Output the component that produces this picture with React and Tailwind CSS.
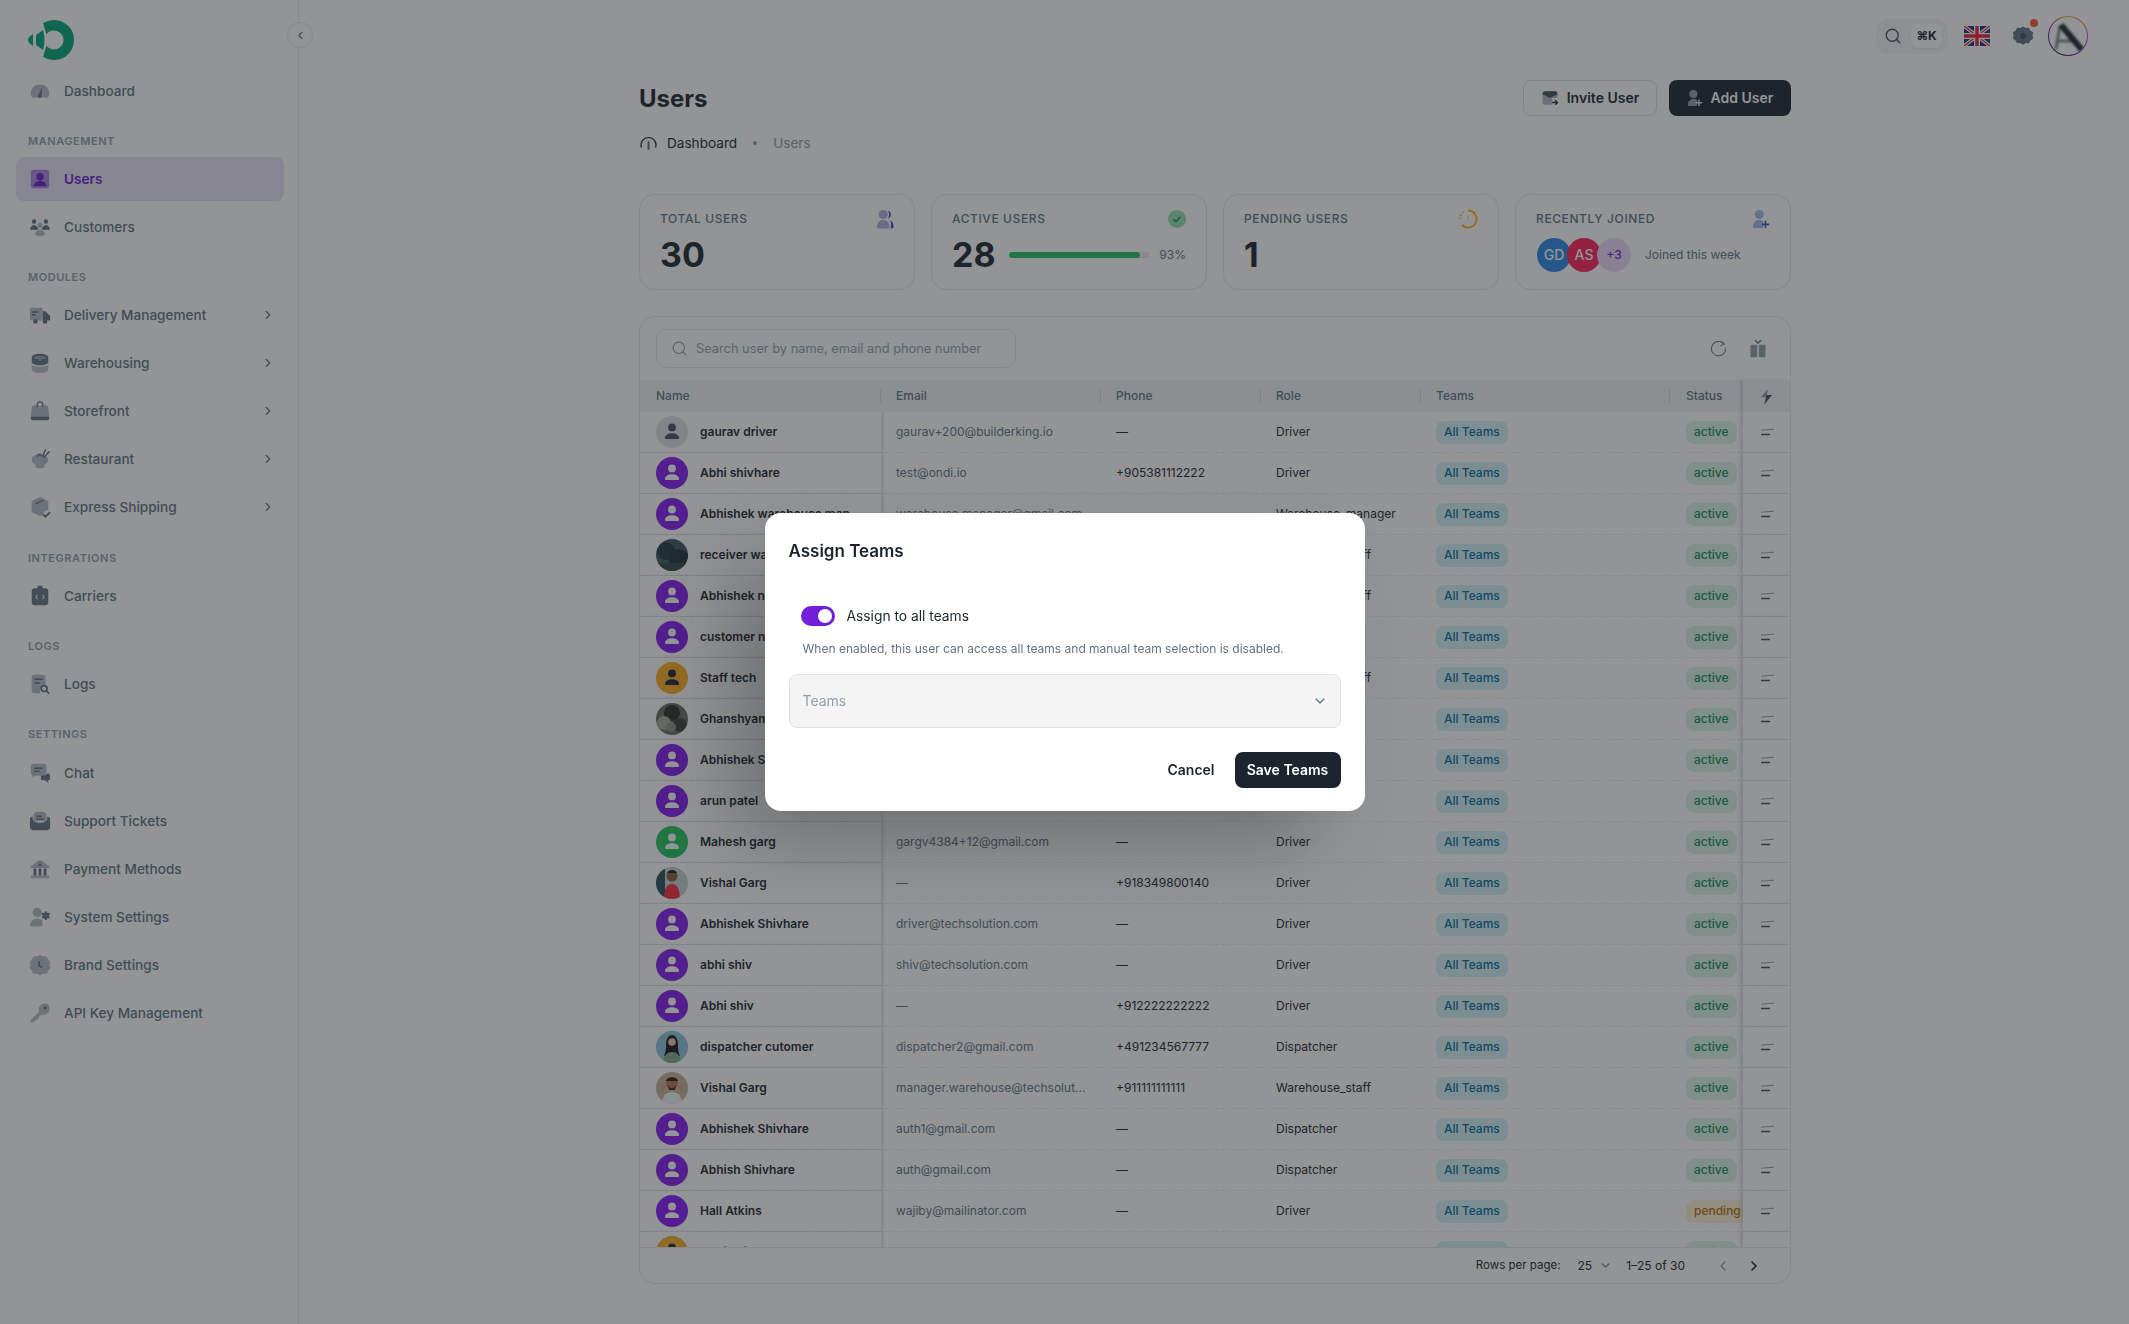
import { ChevronLeft, ChevronRight, ChevronDown, Search } from 'lucide-react'

const FONT = '[font-family:Inter,sans-serif]'

// duotone nav icons, drawn at 24x24
const L = { fill: 'currentColor', opacity: 0.48 }
const D = { fill: 'currentColor' }

const navIcons = {
  dashboard: (
    <>
      <path {...L} d="M2 14.500a10 10 0 0 1 20 0c0 1.800-.4 3.300-1.200 4.500H3.200A9.600 9.600 0 0 1 2 14.500z" />
      <path {...D} d="M14.500 8l-1 9.500a2 2 0 1 1-3.500-1.200z" />
    </>
  ),
  users: (
    <>
      <rect {...L} x="2" y="2" width="20" height="20" rx="3" />
      <circle {...D} cx="12" cy="9.500" r="4" />
      <path {...D} d="M5 20c.5-3.600 3.300-6 7-6s6.500 2.400 7 6z" />
    </>
  ),
  customers: (
    <>
      <circle {...D} cx="5.500" cy="6" r="2.500" />
      <circle {...D} cx="18.500" cy="6" r="2.500" />
      <path {...D} d="M1 15c.3-3 2.200-5 4.500-5S9.700 12 10 15zM14 15c.3-3 2.200-5 4.500-5s4.200 2 4.500 5z" />
      <circle {...L} cx="12" cy="10" r="2.800" />
      <path {...L} d="M6.500 20c.4-3 2.800-5 5.500-5s5.100 2 5.500 5c-1 1.500-3 2-5.500 2s-4.500-.5-5.500-2z" />
    </>
  ),
  delivery: (
    <>
      <path {...L} d="M1 6a2 2 0 0 1 2-2h10a2 2 0 0 1 2 2v12H3a2 2 0 0 1-2-2z" />
      <path {...D} d="M15 8h3l5 5v5h-8z" />
      <path {...D} d="M3 8h7v1.500H3zM3 11h4v1.500H3z" />
      <circle {...D} cx="7" cy="19" r="2.500" />
      <circle {...D} cx="17.500" cy="19" r="2.500" />
    </>
  ),
  warehouse: (
    <>
      <path {...L} d="M3 14c2 1.500 5 2.200 9 2.200s7-.7 9-2.200v5c0 2-4 3.500-9 3.500S3 21 3 19z" />
      <path {...D} d="M3 6c0-2.500 4-4 9-4s9 1.500 9 4v6c-2 1.600-5 2.500-9 2.500S5 13.600 3 12z" />
      <ellipse cx="12" cy="6" rx="7" ry="2" fill="#9ba4ad" />
      <path fill="#9ba4ad" d="M11 7h2v3h-2z" />
    </>
  ),
  storefront: (
    <>
      <path {...L} d="M5 6h14c1 0 1.700.8 2 2l1 10H2L3 8c.3-1.200 1-2 2-2z" />
      <path {...D} d="M2 18h20v1.500c0 1.400-1 2.500-2.500 2.500h-15C3 22 2 20.900 2 19.500z" />
      <path d="M9 8V5a3 3 0 0 1 6 0v3" fill="none" stroke="currentColor" strokeWidth="1.500" />
    </>
  ),
  restaurant: (
    <>
      <path {...L} d="M3 13c0-3 2-5.500 5-6 1.500-1.500 5-1.500 7 .5 3 .5 6 2.500 6 5.500 0 2.500-2 4-3.500 4.500L16 22H8l-1.500-4.500C4.500 17 3 15.500 3 13z" />
      <path d="M9 9.500c1-2 3-2.500 5-1.500" fill="none" stroke="currentColor" strokeWidth="1.600" />
      <path d="M15 9l3-7M16.500 10L22 4" fill="none" stroke="currentColor" strokeWidth="1.600" strokeLinecap="round" />
    </>
  ),
  express: (
    <>
      <path {...L} d="M12 1l9 4.500V15l-5 2.500-1 3.500-3 1-9-4.500V5.500z" />
      <path {...D} d="M6 8l9-4 2 1-9 4.200z" opacity="0.8" />
      <path d="M15.500 20l2.500 2.500 5-5" fill="none" stroke="currentColor" strokeWidth="2" />
    </>
  ),
  carriers: (
    <>
      <path {...D} d="M9 3.500a3 3 0 0 1 6 0h2.500A3.500 3.500 0 0 1 21 7v12a3 3 0 0 1-3 3H6a3 3 0 0 1-3-3V7a3.500 3.500 0 0 1 3.500-3.500z" />
      <path d="M9.500 10.500L7.500 13l2 2.500M14.500 10.500l2 2.500-2 2.500" fill="none" stroke="#c3c8cd" strokeWidth="1.600" />
    </>
  ),
  logs: (
    <>
      <path {...L} d="M3 5a3 3 0 0 1 3-3h9a3 3 0 0 1 3 3v8.500A6 6 0 0 0 12.500 22H6a3 3 0 0 1-3-3z" />
      <path {...D} d="M6 6h9v1.700H6zM6 10h6v1.700H6z" />
      <circle cx="16.500" cy="17" r="3.200" fill="none" stroke="currentColor" strokeWidth="1.800" />
      <path d="M19 19.500l3 3" stroke="currentColor" strokeWidth="1.800" />
    </>
  ),
  chat: (
    <>
      <path {...L} d="M2 5a3 3 0 0 1 3-3h11a3 3 0 0 1 3 3v7a3 3 0 0 1-3 3H7l-3 2v-2.200A3 3 0 0 1 2 12z" />
      <path {...D} d="M5.500 6h9v1.500h-9zM5.500 9.500h6V11h-6z" />
      <path {...D} d="M13 15l6-.8c0-1 .5-1.700 1.500-1.700S23 13 23 14.500V18c0 1-1 1.800-2 1.800v3l-3.500-3H14a2 2 0 0 1-1-1.500z" />
    </>
  ),
  support: (
    <>
      <path {...L} d="M5 6c0-2 1.500-4 4-4h6c2.500 0 4 2 4 4v6H5z" />
      <path {...D} d="M1 10c0-1.500 1.500-3 3-3v3c0 1 3 4 8 4s8-3 8-4V7c1.500 0 3 1.500 3 3v8a4 4 0 0 1-4 4H5a4 4 0 0 1-4-4z" />
      <path {...D} d="M8 6h6v1.500H8zM8 9h8v1.500H8z" />
    </>
  ),
  payment: (
    <>
      <path {...L} d="M2 10c0-1 .8-1.800 2-2.500L10 3c1.200-.8 2.800-.8 4 0l6 4.500c1.200.7 2 1.500 2 2.500v1H2zM2 19h20v3H2z" />
      <circle {...D} cx="12" cy="7.500" r="1.400" />
      <path {...D} d="M5 11.500h3V19H5zM10.500 11.500h3V19h-3zM16 11.500h3V19h-3z" />
    </>
  ),
  system: (
    <>
      <circle {...L} cx="9" cy="7" r="5" />
      <path {...L} d="M1 22c0-5 3.500-8.500 8-8.500 2 0 4 .6 5.500 1.800V22z" />
      <path {...D} d="M19.500 7l1.200.7 1.300-.4.900 1.600-1 .9v1.400l1 .9-.9 1.600-1.300-.4-1.200.7-.3 1.300h-1.800l-.3-1.300-1.200-.7-1.300.4-.9-1.600 1-.9V9.800l-1-.9.9-1.600 1.300.4 1.200-.7.300-1.300h1.800z" />
      <circle cx="18.400" cy="10.500" r="1.300" fill="#8f9497" />
    </>
  ),
  brand: (
    <>
      <path {...L} d="M12 1l3.600 1.600 3.900-.2 1.300 3.700 2.700 2.900L22 12l1.500 3-2.700 2.900-1.300 3.700-3.900-.2L12 23l-3.600-1.600-3.900.2-1.300-3.700L.5 15 2 12 .5 9l2.700-2.900 1.300-3.700 3.900.2z" />
      <path d="M11 7.500V13l3.500 1.500" fill="none" stroke="currentColor" strokeWidth="1.800" />
    </>
  ),
  api: (
    <>
      <path {...L} d="M21 3c-2-2-6-2-8.500.5-2 2-2.400 4.700-1.500 7L2 19.500V22h2.500l1-1 1.500.3.500-2L10 19l.300-2.500 3 -3c2.500 1 5.200.5 7.200-1.500C23 9.500 23 5 21 3z" />
      <circle {...D} cx="17.500" cy="6.500" r="1.500" />
    </>
  ),
}

function NavIcon({ name }) {
  return (
    <svg viewBox="0 0 24 24" className="h-[22px] w-[22px] shrink-0">
      {navIcons[name]}
    </svg>
  )
}

function Logo() {
  return (
    <svg viewBox="0 0 46 40" className="h-10 w-[46px]" fill="#00a878">
      <path d="M5 14Q0 17 0 20t5 6z" />
      <path d="M8 15L15 10Q18 20 15 30L8 25z" />
      <path d="M15 3.300A20 20 0 1 1 15 36.700L18.500 25.800A9.500 9.500 0 1 0 18.500 14.200z" />
    </svg>
  )
}

function NavItem({ icon, label, active, arrow }) {
  return (
    <div
      className={`flex h-11 items-center gap-[13px] rounded-lg pl-[13px] pr-[9px] text-[13.6px] ${
        active ? 'bg-[#7635dc]/[0.14] font-semibold text-[#6b21c8]' : 'font-medium text-[#637381]'
      }`}
    >
      <NavIcon name={icon} />
      <span className="flex-1">{label}</span>
      {arrow && <ChevronRight size={14} strokeWidth={2} />}
    </div>
  )
}

function NavSection({ title, spacing = 'mt-[19px] mb-[7px]', children }) {
  return (
    <div>
      <div className={`h-[18px] pl-3 text-[11px] font-semibold leading-[18px] tracking-[0.05em] text-[#919eab] ${spacing}`}>
        {title}
      </div>
      <div className="flex flex-col gap-1">{children}</div>
    </div>
  )
}

function Sidebar() {
  return (
    <aside className="h-screen w-[299px] shrink-0 border-r border-[#919eab]/20 bg-white">
      <div className="h-[69px] pl-7 pt-5">
        <Logo />
      </div>
      <nav className="pl-4 pr-[14.5px]">
        <NavItem icon="dashboard" label="Dashboard" />
        <NavSection title="MANAGEMENT">
          <NavItem icon="users" label="Users" active />
          <NavItem icon="customers" label="Customers" />
        </NavSection>
        <NavSection title="MODULES">
          <NavItem icon="delivery" label="Delivery Management" arrow />
          <NavItem icon="warehouse" label="Warehousing" arrow />
          <NavItem icon="storefront" label="Storefront" arrow />
          <NavItem icon="restaurant" label="Restaurant" arrow />
          <NavItem icon="express" label="Express Shipping" arrow />
        </NavSection>
        <NavSection title="INTEGRATIONS" spacing="mt-5 mb-[7px]">
          <NavItem icon="carriers" label="Carriers" />
        </NavSection>
        <NavSection title="LOGS">
          <NavItem icon="logs" label="Logs" />
        </NavSection>
        <NavSection title="SETTINGS" spacing="mt-[19px] mb-2">
          <NavItem icon="chat" label="Chat" />
          <NavItem icon="support" label="Support Tickets" />
          <NavItem icon="payment" label="Payment Methods" />
          <NavItem icon="system" label="System Settings" />
          <NavItem icon="brand" label="Brand Settings" />
          <NavItem icon="api" label="API Key Management" />
        </NavSection>
      </nav>
    </aside>
  )
}

function Flag() {
  return (
    <svg viewBox="0 0 26 20" className="h-5 w-[26px]">
      <rect width="26" height="20" rx="2" fill="#1f2f8a" />
      <path d="M0 0l26 20M26 0L0 20" stroke="#fff" strokeWidth="3.500" />
      <path d="M0 0l26 20M26 0L0 20" stroke="#f01c35" strokeWidth="1.200" />
      <path d="M13 0v20M0 10h26" stroke="#fff" strokeWidth="6" />
      <path d="M13 0v20M0 10h26" stroke="#f01c35" strokeWidth="3.400" />
    </svg>
  )
}

function Header() {
  return (
    <header className="flex h-[72px] items-center justify-end pr-[39px]">
      <div className="flex h-[35px] w-[72px] items-center justify-between rounded-xl bg-[#919eab]/[0.08] pl-2 pr-1.5">
        <Search size={18} className="text-[#454f5b]" strokeWidth={1.8} />
        <div className="flex h-6 w-[31px] items-center justify-center rounded-md bg-white text-xs font-bold text-[#1c252e] shadow-[0_1px_2px_rgba(145,158,171,0.16)]">
          ⌘K
        </div>
      </div>
      <div className="ml-4">
        <Flag />
      </div>
      <div className="relative ml-[22px] mr-[14px]">
        <svg viewBox="0 0 24 24" className="h-[22px] w-[22px] text-[#637381]">
          <path
            fill="currentColor"
            d="M12 1.500l3 1.800 3.500-.3 1.500 3.200 3 1.800-.7 3.500.7 3.500-3 1.800-1.500 3.200-3.500-.3-3 1.800-3-1.800-3.500.3L4 16.800 1 15l.7-3.500L1 8l3-1.800L5.500 3 9 3.300z"
          />
          <circle cx="12" cy="12" r="3" fill="#3f4a55" />
        </svg>
        <span className="absolute -right-1 -top-1.5 h-2 w-2 rounded-full bg-[#ff5630]" />
      </div>
      <div className="mr-[2px] h-10 w-10 rounded-full bg-[conic-gradient(#ffab00,#e0609a,#7020d8,#1c252e,#7020d8,#ffab00)] p-px">
        <div className="h-full w-full overflow-hidden rounded-full bg-white">
          <svg viewBox="0 0 38 38" className="h-full w-full blur-[1px]" fill="none">
            <path d="M11 8L7 32M8 24h16" stroke="#637381" strokeWidth="2.500" />
            <path d="M12 8L33 33" stroke="#1c252e" strokeWidth="6" />
          </svg>
        </div>
      </div>
    </header>
  )
}

function StatCard({ label, icon, children }) {
  return (
    <div className="h-24 rounded-2xl border border-[#919eab]/20 bg-white px-5 pt-[14px]">
      <div className="flex h-5 items-center justify-between">
        <span className="text-xs font-medium tracking-[0.05em] text-[#637381]">{label}</span>
        {icon}
      </div>
      <div className="mt-[5px] flex h-[42px] items-center">{children}</div>
    </div>
  )
}

function Person({ className }) {
  return (
    <svg viewBox="0 0 24 24" className={className} fill="currentColor">
      <circle cx="12" cy="7.800" r="3.600" />
      <path d="M5.500 17.500c0-2.700 2.900-4.300 6.500-4.300s6.500 1.600 6.500 4.300c0 .8-.5 1-1.200 1H6.700c-.7 0-1.200-.2-1.200-1z" />
    </svg>
  )
}

// the photos in the table, reduced to a few shapes
const photos = {
  receiver: (
    <>
      <rect width="32" height="32" fill="#3e5a5c" />
      <circle cx="10" cy="12" r="9" fill="#223a3c" />
      <circle cx="23" cy="20" r="10" fill="#1f3337" />
      <path d="M0 24h32v8H0z" fill="#2f4a4a" />
    </>
  ),
  ghanshyam: (
    <>
      <rect width="32" height="32" fill="#68705f" />
      <circle cx="16" cy="10" r="8" fill="#2c3326" />
      <circle cx="8" cy="20" r="7" fill="#a7ad9a" />
      <circle cx="24" cy="22" r="7" fill="#3a4234" />
      <circle cx="15" cy="24" r="5" fill="#8c9380" />
    </>
  ),
  vishal: (
    <>
      <rect width="32" height="32" fill="#c7d2cf" />
      <rect width="9" height="32" fill="#26505a" />
      <circle cx="16" cy="9" r="5.500" fill="#8a5a3c" />
      <path d="M11 6c2-4 8-4 10 0z" fill="#1c1a1a" />
      <path d="M8 32c0-10 3-15 8-15s8 5 8 15z" fill="#ff2a40" />
    </>
  ),
  dispatcher: (
    <>
      <rect width="32" height="32" fill="#8fc4dc" />
      <path d="M10 14c0-7 3-10 6-10s6 3 6 10c0 6 1 9 2 11H8c1-2 2-5 2-11z" fill="#15161a" />
      <circle cx="16" cy="11" r="3.800" fill="#f0c4aa" />
      <path d="M7 32c0-7 4-11 9-11s9 4 9 11z" fill="#8aa88e" />
    </>
  ),
  vishal2: (
    <>
      <rect width="32" height="32" fill="#c9b198" />
      <circle cx="16" cy="11" r="6" fill="#b8764c" />
      <path d="M10 9c1-5 11-5 12 0z" fill="#2a1c14" />
      <path d="M12 13c1 4 7 4 8 0l-1 5h-6z" fill="#3a2a20" />
      <path d="M6 32c0-8 4-12 10-12s10 4 10 12z" fill="#f2f3f0" />
    </>
  ),
}

function Avatar({ kind }) {
  if (photos[kind]) {
    return (
      <svg viewBox="0 0 32 32" className="h-8 w-8 shrink-0 rounded-full">
        {photos[kind]}
      </svg>
    )
  }
  const tone = {
    gray: 'bg-[#dfe3e8] text-[#454f5b]',
    purple: 'bg-[#8418f0] text-white',
    violet: 'bg-[#8a14ff] text-white',
    amber: 'bg-[#ffb020] text-[#1c252e]',
    green: 'bg-[#22c55e] text-white',
  }[kind]
  return (
    <div className={`flex h-8 w-8 shrink-0 items-center justify-center rounded-full ${tone}`}>
      <Person className="h-[26px] w-[26px]" />
    </div>
  )
}

const rows = [
  { kind: 'gray', name: 'gaurav driver', email: 'gaurav+200@builderking.io', phone: '—', role: 'Driver' },
  { kind: 'purple', name: 'Abhi shivhare', email: 'test@ondi.io', phone: '+905381112222', role: 'Driver' },
  { kind: 'purple', name: 'Abhishek warehouse man', email: 'warehouse.manager@gmail.com', phone: '—', role: 'Warehouse_manager' },
  { kind: 'receiver', name: 'receiver wa', email: '', phone: '', role: 'Warehouse_staff' },
  { kind: 'purple', name: 'Abhishek n', email: '', phone: '', role: 'Warehouse_staff' },
  { kind: 'purple', name: 'customer n', email: '', phone: '', role: '' },
  { kind: 'amber', name: 'Staff tech', email: '', phone: '', role: 'Warehouse_staff' },
  { kind: 'ghanshyam', name: 'Ghanshyam', email: '', phone: '', role: '' },
  { kind: 'purple', name: 'Abhishek S', email: '', phone: '', role: '' },
  { kind: 'purple', name: 'arun patel', email: '', phone: '', role: '' },
  { kind: 'green', name: 'Mahesh garg', email: 'gargv4384+12@gmail.com', phone: '—', role: 'Driver' },
  { kind: 'vishal', name: 'Vishal Garg', email: '—', phone: '+918349800140', role: 'Driver' },
  { kind: 'purple', name: 'Abhishek Shivhare', email: 'driver@techsolution.com', phone: '—', role: 'Driver' },
  { kind: 'purple', name: 'abhi shiv', email: 'shiv@techsolution.com', phone: '—', role: 'Driver' },
  { kind: 'purple', name: 'Abhi shiv', email: '—', phone: '+912222222222', role: 'Driver' },
  { kind: 'dispatcher', name: 'dispatcher cutomer', email: 'dispatcher2@gmail.com', phone: '+491234567777', role: 'Dispatcher' },
  { kind: 'vishal2', name: 'Vishal Garg', email: 'manager.warehouse@techsolut...', phone: '+911111111111', role: 'Warehouse_staff' },
  { kind: 'purple', name: 'Abhishek Shivhare', email: 'auth1@gmail.com', phone: '—', role: 'Dispatcher' },
  { kind: 'purple', name: 'Abhish Shivhare', email: 'auth@gmail.com', phone: '—', role: 'Dispatcher' },
  { kind: 'violet', name: 'Hall Atkins', email: 'wajiby@mailinator.com', phone: '—', role: 'Driver', status: 'pending' },
  { kind: 'amber', name: 'Abhi shiv', email: '', phone: '', role: '' },
]

const COLS = 'grid grid-cols-[241px_220px_160px_160px_249px_73px_47px]'

function HeaderCell({ label, className = 'pl-[15px]' }) {
  return (
    <div className={`flex items-center justify-between text-xs font-medium text-[#637381] ${className}`}>
      <span>{label}</span>
      <span className="h-3.5 w-px bg-[#919eab]/30" />
    </div>
  )
}

function Row({ row }) {
  const pending = row.status === 'pending'
  return (
    <div className={`${COLS} h-[41px] border-b border-dashed border-[#919eab]/20 text-xs text-[#1c252e]`}>
      <div className="relative z-10 flex items-center gap-3 bg-white pl-4 font-semibold shadow-[2px_0_3px_rgba(145,158,171,0.3)]">
        <Avatar kind={row.kind} />
        <span className="whitespace-nowrap">{row.name}</span>
      </div>
      <div className="flex items-center pl-[15px] text-[#637381]">{row.email}</div>
      <div className="flex items-center pl-[15px]">{row.phone}</div>
      <div className="flex items-center whitespace-nowrap pl-[15px]">{row.role}</div>
      <div className="flex items-center pl-[15px]">
        <span className="flex h-[23px] items-center rounded-lg bg-[#00b8d9]/[0.16] px-2 text-xs font-medium text-[#006c9c]">All Teams</span>
      </div>
      <div className="flex items-center overflow-hidden pl-4">
        <span
          className={`flex h-[23px] items-center rounded-lg px-2 text-xs font-medium ${
            pending ? 'bg-[#ffab00]/[0.16] text-[#b76e00]' : 'bg-[#22c55e]/[0.16] text-[#118d57]'
          }`}
        >
          {pending ? 'pending' : 'active'}
        </span>
      </div>
      <div className="relative z-10 flex items-center justify-center bg-white shadow-[-3px_0_3px_rgba(145,158,171,0.3)]">
        <svg viewBox="0 0 16 10" className="h-2.5 w-4">
          <path d="M2 3.200L15 2.200" stroke="#919eab" strokeWidth="1" />
          <path d="M2 7.500h9" stroke="#454f5b" strokeWidth="1.500" />
        </svg>
      </div>
    </div>
  )
}

function UsersTable() {
  return (
    <div className="mt-[26px] h-[968px] overflow-hidden rounded-2xl border border-[#919eab]/20 bg-white">
      <div className="flex h-[63px] items-center justify-between pl-4 pr-[22px]">
        <div className="flex h-[39px] w-[360px] items-center gap-2 rounded-[10px] border border-[#919eab]/20 pl-[14px] text-[12.8px] text-[#919eab]">
          <Search size={17} strokeWidth={1.6} />
          <span>Search user by name, email and phone number</span>
        </div>
        <div className="flex items-center gap-[20px] text-[#637381]">
          <svg viewBox="0 0 24 24" className="h-[19px] w-[19px]" fill="none" stroke="currentColor" strokeWidth="1.300">
            <path d="M19 6.500A9 9 0 1 0 21 12" />
            <path d="M15 2.500l4.200 4-4.700 2.300" strokeWidth="1.500" opacity="0.8" />
          </svg>
          <svg viewBox="0 0 24 24" className="h-[20px] w-[20px]" fill="currentColor">
            <rect x="3" y="7" width="8" height="15" rx="1.500" opacity="0.7" />
            <rect x="13" y="7" width="8" height="15" rx="1.500" opacity="0.7" />
            <path d="M8.500 1.500L12 5l3.500-3.500" fill="none" stroke="currentColor" strokeWidth="1.500" />
          </svg>
        </div>
      </div>
      <div className={`${COLS} h-8 bg-[#f4f6f8]`}>
        <HeaderCell label="Name" className="pl-4" />
        <HeaderCell label="Email" />
        <HeaderCell label="Phone" />
        <HeaderCell label="Role" />
        <HeaderCell label="Teams" />
        <div className="flex items-center pl-4 text-xs font-medium text-[#637381]">Status</div>
        <div className="relative z-10 flex items-center justify-center bg-[#f4f6f8] shadow-[-3px_0_3px_rgba(145,158,171,0.3)]">
          <svg viewBox="0 0 24 24" className="h-[17px] w-[17px] text-[#454f5b]" fill="currentColor">
            <path opacity="0.55" d="M14 1L4 13h8z" />
            <path d="M9 23l11-13h-8z" />
          </svg>
        </div>
      </div>
      <div className="h-[835px] overflow-hidden">
        {rows.map((row, i) => (
          <Row key={i} row={row} />
        ))}
      </div>
      <div className="flex h-[36px] items-center justify-end border-t border-[#919eab]/20 pr-[28px] text-xs text-[#1c252e]">
        <span className="text-[11.5px]">Rows per page:</span>
        <span className="ml-[17px]">25</span>
        <ChevronDown size={13} className="ml-[7px] text-[#637381]" />
        <span className="ml-[14px]">1–25 of 30</span>
        <ChevronLeft size={16} className="ml-[30px] text-[#919eab]" />
        <ChevronRight size={16} strokeWidth={2.5} className="ml-[15px]" />
      </div>
    </div>
  )
}

function Stats() {
  return (
    <div className="mt-[41px] grid grid-cols-4 gap-4">
      <StatCard
        label="TOTAL USERS"
        icon={
          <svg viewBox="0 0 20 22" className="h-[22px] w-[18px]">
            <circle cx="8" cy="6" r="5" fill="#7b74c9" opacity="0.6" />
            <path d="M1 20c0-5 3-8 7-8s7 3 7 8c0 1-1 1.500-2 1.500H3c-1 0-2-.5-2-1.500z" fill="#7b74c9" opacity="0.6" />
            <path d="M13 1.500c2 .5 3.500 2.200 3.500 4.500S15 10 13 10.500c1-1.200 1.500-2.700 1.500-4.500S14 2.700 13 1.500zM16 12.500c2 1 3.500 3.500 3.500 7.500 0 1-1 1.500-2 1.500h-1c.5-4 0-7-.5-9z" fill="#4c3fb8" />
          </svg>
        }
      >
        <span className="text-[34px] font-bold leading-none text-[#1c252e]">30</span>
      </StatCard>
      <StatCard
        label="ACTIVE USERS"
        icon={
          <svg viewBox="0 0 18 18" className="h-[18px] w-[18px]">
            <circle cx="9" cy="9" r="9" fill="#22c55e" opacity="0.5" />
            <path d="M5.500 9.200l2.500 2.500 4.500-5" fill="none" stroke="#118d57" strokeWidth="1.500" />
          </svg>
        }
      >
        <span className="text-[34px] font-bold leading-none text-[#1c252e]">28</span>
        <div className="ml-[13px] h-1.5 w-[142px] rounded-full bg-[#919eab]/20">
          <div className="h-1.5 rounded-full bg-[#22c55e]" style={{ width: '93%' }} />
        </div>
        <span className="ml-[9px] text-xs text-[#637381]">93%</span>
      </StatCard>
      <StatCard
        label="PENDING USERS"
        icon={
          <svg viewBox="0 0 20 20" className="h-[20px] w-[20px]" fill="none">
            <path d="M10 1.500a8.500 8.500 0 1 1-6 14.500" stroke="#ffab00" strokeWidth="1.800" />
            <path d="M1.500 10a8.500 8.500 0 0 1 4-7" stroke="#ffab00" strokeWidth="1.500" strokeDasharray="1.500 2" />
            <path d="M10 6v5" stroke="#ffab00" strokeWidth="1.300" opacity="0.5" />
          </svg>
        }
      >
        <span className="text-[34px] font-bold leading-none text-[#1c252e]">1</span>
      </StatCard>
      <StatCard
        label="RECENTLY JOINED"
        icon={
          <svg viewBox="0 0 20 22" className="h-[22px] w-[18px]">
            <circle cx="8" cy="6" r="5" fill="#4f74e0" opacity="0.5" />
            <path d="M1 20c0-5 3-8 7-8 2 0 3.500.6 4.500 1.800V21H3c-1 0-2-.5-2-1z" fill="#4f74e0" opacity="0.5" />
            <path d="M15 13v8M11 17h8" stroke="#3056d3" strokeWidth="1.800" />
          </svg>
        }
      >
        <div className="ml-[1px] flex">
          <div className="flex h-[34px] w-[34px] items-center justify-center rounded-full bg-[#2a88e8] text-sm font-medium text-white">GD</div>
          <div className="-ml-[4px] flex h-[34px] w-[34px] items-center justify-center rounded-full bg-[#ff1f5a] text-sm font-medium text-white">AS</div>
          <div className="-ml-[4px] flex h-[34px] w-[34px] items-center justify-center rounded-full bg-[#efd8fb] text-xs font-medium text-[#6b21c8]">+3</div>
        </div>
        <span className="ml-[14px] text-xs text-[#637381]">Joined this week</span>
      </StatCard>
    </div>
  )
}

function AssignTeamsModal() {
  return (
    <div className="fixed inset-0 z-50 flex items-center justify-center bg-[#202428]/[0.49]">
      <div className="h-[298px] w-[600px] rounded-2xl bg-white px-6 pt-[26px] shadow-[-40px_40px_80px_-8px_rgba(0,0,0,0.24)]">
        <h2 className="text-[17px] font-semibold leading-6 text-[#1c252e]">Assign Teams</h2>
        <div className="mt-[43px] flex items-center gap-3 pl-3">
          <div className="flex h-5 w-[34px] items-center justify-end rounded-full bg-[#7020d8] pr-[3px]">
            <div className="h-[14px] w-[14px] rounded-full bg-white" />
          </div>
          <span className="text-[13.8px] text-[#1c252e]">Assign to all teams</span>
        </div>
        <p className="mt-[13px] pl-[14px] text-xs leading-[18px] text-[#637381]">
          When enabled, this user can access all teams and manual team selection is disabled.
        </p>
        <div className="mt-4 flex h-[54px] items-center justify-between rounded-lg border border-[#dfe3e8] bg-[#f4f4f5] pl-[13px] pr-3 text-sm text-[#919eab]">
          <span>Teams</span>
          <ChevronDown size={16} className="text-[#637381]" />
        </div>
        <div className="mt-6 flex items-center justify-end gap-5">
          <span className="text-sm font-semibold text-[#1c252e]">Cancel</span>
          <span className="flex h-9 w-[106px] items-center justify-center rounded-lg bg-[#1c252e] text-sm font-semibold text-white">Save Teams</span>
        </div>
      </div>
    </div>
  )
}

export default function App() {
  return (
    <div className={`${FONT} relative flex h-screen overflow-hidden bg-white`}>
      <Sidebar />
      <button className="absolute left-[287px] top-[22px] z-10 flex h-[26px] w-[26px] items-center justify-center rounded-full border border-[#919eab]/20 bg-white text-[#637381]">
        <ChevronLeft size={13} strokeWidth={2} />
      </button>
      <main className="min-w-0 flex-1">
        <Header />
        <div className="ml-[340px] w-[1152px]">
          <div className="mt-2 flex h-9 items-center justify-between">
            <h1 className="pt-0.5 text-2xl font-bold text-[#1c252e]">Users</h1>
            <div className="flex items-center gap-3">
              <span className="flex h-9 w-[134px] items-center justify-center gap-2 rounded-lg border border-[#919eab]/30 text-sm font-semibold text-[#1c252e]">
                <svg viewBox="0 0 24 24" className="h-[18px] w-[18px]">
                  <path fill="#637381" opacity="0.5" d="M2 7a4 4 0 0 1 4-4h12a4 4 0 0 1 4 4v5h-7v9H6a4 4 0 0 1-4-4z" />
                  <path fill="#454f5b" d="M2 7a4 4 0 0 1 4-4h12a4 4 0 0 1 4 4L12 12 2 7z" />
                  <path d="M15 18h7M19 15l3 3-3 3" fill="none" stroke="#1c252e" strokeWidth="1.800" />
                </svg>
                Invite User
              </span>
              <span className="flex h-9 w-[122px] items-center justify-center gap-2 rounded-lg bg-[#1c252e] text-sm font-semibold text-white">
                <svg viewBox="0 0 20 22" className="h-[18px] w-[16px]">
                  <circle cx="8" cy="6" r="5" fill="#919eab" />
                  <path d="M1 20c0-5 3-8 7-8 2 0 3.500.6 4.500 1.800V21H3c-1 0-2-.5-2-1z" fill="#919eab" />
                  <path d="M15 13v8M11 17h8" stroke="#dfe3e8" strokeWidth="1.800" />
                </svg>
                Add User
              </span>
            </div>
          </div>
          <div className="mt-[17px] flex h-5 items-center text-[13.6px]">
            <svg viewBox="0 0 24 24" className="h-[19px] w-[19px] text-[#1c252e]" fill="none" stroke="currentColor" strokeWidth="1.500">
              <path d="M3 17a9.500 9.500 0 1 1 18 0" />
              <path d="M12 10v9" strokeWidth="2.500" stroke="#637381" strokeLinecap="round" />
            </svg>
            <span className="ml-[9px] text-[#1c252e]">Dashboard</span>
            <span className="ml-4 h-1 w-1 rounded-full bg-[#919eab]" />
            <span className="ml-4 text-[#919eab]">Users</span>
          </div>
          <Stats />
          <UsersTable />
        </div>
      </main>
      <AssignTeamsModal />
    </div>
  )
}
